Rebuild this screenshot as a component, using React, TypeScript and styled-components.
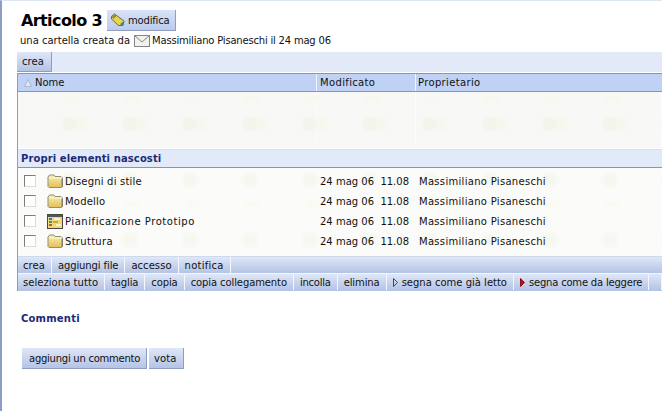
import React from "react";
import styled, { createGlobalStyle } from "styled-components";

const Global = createGlobalStyle`
  html, body { margin: 0; padding: 0; background: #fff; }
  body { width: 662px; height: 411px; overflow: hidden; font-family: "DejaVu Sans", Verdana, sans-serif; font-size: 10px; color: #111; }
`;

const Page = styled.div`
  box-sizing: border-box;
  width: 662px;
  height: 411px;
  border-left: 2px solid #8d9bc7;
  border-top: 1px solid #dfe6f5;
  padding: 8px 0 0 15px;
  overflow: hidden;
`;
const TitleRow = styled.div`
  display: flex;
  align-items: center;
  gap: 5px;
  padding-left: 4px;
  height: 23px;
`;
const Title = styled.h1`
  margin: 0;
  font: bold 16px "DejaVu Sans", sans-serif;
  letter-spacing: -0.6px;
  color: #000;
`;
const EditButton = styled.div`
  box-sizing: border-box;
  display: flex;
  align-items: center;
  gap: 2px;
  height: 21px;
  width: 69px;
  padding-left: 3px;
  background: linear-gradient(#d9e3f7, #bccbea);
  border-right: 1px solid #8f9dc4;
  border-bottom: 1px solid #8f9dc4;
  font-size: 10px;
  letter-spacing: -0.2px;
`;
const Byline = styled.div`
  display: flex;
  align-items: center;
  height: 15px;
  padding-left: 3px;
  margin-top: 1px;
  font-size: 10px;
  white-space: nowrap;
`;
const BylineLead = styled.span`
  margin-right: 4px;
`;
const BylineTail = styled.span`
  margin-left: 2px;
  letter-spacing: -0.2px;
`;
const TopBar = styled.div`
  display: flex;
  height: 20px;
  margin-top: 4px;
  background: #e2eafa;
`;
const Tab = styled.div<{ $ls?: number; $gap?: number }>`
  box-sizing: border-box;
  display: flex;
  align-items: center;
  gap: ${(p) => p.$gap ?? 3}px;
  height: 16px;
  padding: 0 6px;
  background: linear-gradient(#dfe7f8, #b4c4e5);
  border-right: 1px solid #f4f6fc;
  font-size: 10px;
  white-space: nowrap;
  letter-spacing: ${(p) => p.$ls ?? 0.05}px;
  &:first-child { padding-left: 5px; }
`;
const TopTab = styled(Tab)`
  height: 20px;
  padding: 0 7px 0 6px;
  border-right: 1px solid #8f9dc4;
  border-bottom: 1px solid #8f9dc4;
`;
const Table = styled.div`
  border-left: 1px solid #8d9bc7;
  margin-top: 1px;
`;
const Columns = "299px 99px 1fr";
const HeadRow = styled.div`
  display: grid;
  grid-template-columns: ${Columns};
  height: 19px;
  border-top: 1px solid #8a93b0;
  border-bottom: 1px solid #8a93b0;
  box-sizing: border-box;
  background: #bfd1f4;
`;
const HeadCell = styled.div`
  display: flex;
  align-items: center;
  gap: 3px;
  padding-left: 3px;
  border-right: 1px solid #f2f5fc;
  font-size: 10px;
  letter-spacing: 0.35px;
  &:first-child { padding-left: 6px; letter-spacing: 0; }
  &:last-child { border-right: none; padding-left: 2px; }
`;
const EmptyArea = styled.div`
  display: grid;
  grid-template-columns: ${Columns};
  height: 56px;
  background: #f8f8f6;
  position: relative;
`;
const EmptyCell = styled.div`
  border-right: 1px solid #fcfcfb;
  &:last-child { border-right: none; }
`;
const Patch = styled.div<{ $x: number; $y: number; $w: number; $h: number; $c: string }>`
  position: absolute;
  left: ${(p) => p.$x}px;
  top: ${(p) => p.$y}px;
  width: ${(p) => p.$w}px;
  height: ${(p) => p.$h}px;
  background: ${(p) => p.$c};
  filter: blur(1.5px);
`;
const SectionHead = styled.div`
  display: flex;
  align-items: center;
  height: 19px;
  margin-top: 1px;
  padding-left: 3px;
  background: #e2eafa;
  border-top: 1px solid #d5dff3;
  border-bottom: 1px solid #8a93b0;
  box-sizing: border-box;
  font: bold 10px "DejaVu Sans", sans-serif;
  color: #1c2a78;
  letter-spacing: 0.1px;
`;
const Rows = styled.div`
  position: relative;
  box-sizing: border-box;
  height: 89px;
  padding-top: 3px;
  background: #fbfbf9;
  border-bottom: 1px solid #cfd9ee;
`;
const Row = styled.div`
  position: relative;
  display: grid;
  grid-template-columns: ${Columns};
  height: 20px;
  align-items: center;
`;
const NameCell = styled.div`
  display: flex;
  align-items: center;
  padding-left: 6px;
  white-space: nowrap;
`;
const Check = styled.span`
  box-sizing: border-box;
  display: block;
  width: 12px;
  height: 12px;
  background: #fff;
  border: 1px solid #7d7d78;
  border-right-color: #dcdcd8;
  border-bottom-color: #dcdcd8;
  margin-right: 11px;
`;
const Name = styled.span<{ $ls: number }>`
  margin-left: 2px;
  letter-spacing: ${(p) => p.$ls}px;
`;
const DateCell = styled.div`
  padding-left: 3px;
  white-space: pre;
`;
const OwnerCell = styled.div`
  padding-left: 3px;
  white-space: nowrap;
  letter-spacing: 0.3px;
`;
const ActionBar = styled.div`
  display: flex;
  height: 16px;
  background: linear-gradient(#dfe7f8, #b4c4e5);
  overflow: hidden;
`;
const SelectBar = styled(ActionBar)`
  height: 17px;
  border-top: 1px solid #f4f6fc;
`;
const SectionTitle = styled.h2`
  margin: 22px 0 0 4px;
  height: 14px;
  font: bold 10px "DejaVu Sans", sans-serif;
  color: #1c2a78;
  letter-spacing: 0.2px;
`;
const BottomActions = styled.div`
  display: flex;
  gap: 2px;
  margin: 21px 0 0 5px;
`;
const BottomButton = styled(Tab)`
  height: 21px;
  padding: 0 6px 0 7px;
  border-right: 1px solid #8f9dc4;
  border-bottom: 1px solid #8f9dc4;
  &:first-child { padding-left: 7px; }
`;
const VoteButton = styled(BottomButton)`
  padding: 0 7px 0 5px;
`;

const Pencil = () => (
  <svg width="16" height="15" viewBox="0 0 16 15">
    <path d="M1.5 3.5 4.5 1 14 8 13 12.5 8.5 12.5 1.5 6Z" fill="#e8d54e" stroke="#6d6a35" strokeWidth="1" strokeLinejoin="round" />
    <path d="M1.5 3.5 4.5 1 6.5 3 3.5 6Z" fill="#8d8d5a" />
    <path d="M11 10 14 8.5 13 12.5 10 12.5Z" fill="#2f8f8a" />
  </svg>
);
const Mail = () => (
  <svg width="16" height="12" viewBox="0 0 16 12">
    <rect x=".5" y=".5" width="15" height="11" fill="#f2f1ec" stroke="#85858a" />
    <path d="M1 1 8 7 15 1" fill="none" stroke="#85858a" />
  </svg>
);
const Folder = () => (
  <svg width="16" height="14" viewBox="0 0 16 14">
    <defs>
      <linearGradient id="folderFill" x1="0" y1="0" x2="0" y2="1">
        <stop offset="0" stopColor="#fbf0b0" />
        <stop offset="1" stopColor="#e2bf58" />
      </linearGradient>
    </defs>
    <path d="M1 3 2.5 1H7L8 2.5H14L15.5 4V12.5L14.5 13.5H2L1 12.5Z" fill="url(#folderFill)" stroke="#8f8f80" />
    <path d="M2 4H14.5" stroke="#fff8d0" />
    <path d="M15 5V13" stroke="#77786e" />
  </svg>
);
const PlanIcon = () => (
  <svg width="16" height="15" viewBox="0 0 16 15">
    <rect x=".5" y=".5" width="15" height="14" fill="#f0d680" stroke="#4a4a3c" />
    <rect x="1" y="1" width="14" height="2" fill="#4d5560" />
    <rect x="2" y="4" width="3" height="2" fill="#3f6fb5" />
    <rect x="2" y="7" width="3" height="2" fill="#3f9a55" />
    <rect x="2" y="10" width="3" height="2" fill="#b55a3f" />
    <rect x="7" y="4" width="6" height="2" fill="#fbf3c8" />
    <rect x="6" y="7" width="5" height="2" fill="#c9a84a" />
    <rect x="9" y="10" width="5" height="2" fill="#fbf3c8" />
  </svg>
);
const SortArrow = () => (
  <svg width="8" height="8" viewBox="0 0 8 8">
    <path d="M4 .5 7.5 7.5H.5Z" fill="#dfe6f7" stroke="#a5aec9" strokeWidth=".8" />
  </svg>
);
const Triangle = ({ fill }: { fill: string }) => (
  <svg width="5" height="9" viewBox="0 0 5 9">
    <path d="M.5 .5 4.5 4.5 .5 8.5Z" fill={fill} stroke={fill === "none" ? "#39477f" : "#8a1020"} />
  </svg>
);

const rows = [
  { name: "Disegni di stile", icon: <Folder />, ls: 0.2 },
  { name: "Modello", icon: <Folder />, ls: 0.2 },
  { name: "Pianificazione Prototipo", icon: <PlanIcon />, ls: 0.55 },
  { name: "Struttura", icon: <Folder />, ls: 0.3 },
];

const patchX = [0, 60, 120, 180, 240, 300, 360, 420, 480, 540, 600];

export default function App() {
  return (
    <>
      <Global />
      <Page>
        <TitleRow>
          <Title>Articolo 3</Title>
          <EditButton>
            <Pencil />
            modifica
          </EditButton>
        </TitleRow>
        <Byline>
          <BylineLead>una cartella creata da</BylineLead>
          <Mail />
          <BylineTail>Massimiliano Pisaneschi il 24 mag 06</BylineTail>
        </Byline>
        <TopBar>
          <TopTab>crea</TopTab>
        </TopBar>
        <Table>
          <HeadRow>
            <HeadCell>
              <SortArrow />
              Nome
            </HeadCell>
            <HeadCell>Modificato</HeadCell>
            <HeadCell>Proprietario</HeadCell>
          </HeadRow>
          <EmptyArea>
            <EmptyCell />
            <EmptyCell />
            <EmptyCell />
            {patchX.map((x) => (
              <React.Fragment key={x}>
                <Patch $x={x + 45} $y={26} $w={14} $h={12} $c="#f1f5ea" />
                <Patch $x={x + 60} $y={27} $w={8} $h={10} $c="#f5f7ec" />
                <Patch $x={x + 48} $y={4} $w={12} $h={5} $c="#f7f7ec" />
              </React.Fragment>
            ))}
          </EmptyArea>
          <SectionHead>Propri elementi nascosti</SectionHead>
          <Rows>
            {patchX.map((x) => (
              <React.Fragment key={x}>
                <Patch $x={x + 45} $y={6} $w={14} $h={12} $c="#f5f8f0" />
                <Patch $x={x + 48} $y={34} $w={12} $h={5} $c="#f9f9f0" />
                <Patch $x={x + 45} $y={66} $w={14} $h={12} $c="#f5f8f0" />
              </React.Fragment>
            ))}
            {rows.map((r) => (
              <Row key={r.name}>
                <NameCell>
                  <Check />
                  {r.icon}
                  <Name $ls={r.ls}>{r.name}</Name>
                </NameCell>
                <DateCell>24 mag 06  11.08</DateCell>
                <OwnerCell>Massimiliano Pisaneschi</OwnerCell>
              </Row>
            ))}
          </Rows>
          <ActionBar>
            <Tab>crea</Tab>
            <Tab $ls={-0.1}>aggiungi file</Tab>
            <Tab>accesso</Tab>
            <Tab $ls={0.25}>notifica</Tab>
          </ActionBar>
          <SelectBar>
            <Tab>seleziona tutto</Tab>
            <Tab $ls={-0.15}>taglia</Tab>
            <Tab $ls={-0.1}>copia</Tab>
            <Tab $ls={-0.1}>copia collegamento</Tab>
            <Tab $ls={-0.25}>incolla</Tab>
            <Tab $ls={-0.1}>elimina</Tab>
            <Tab $ls={0} $gap={4}>
              <Triangle fill="none" />
              segna come già letto
            </Tab>
            <Tab $ls={-0.2} $gap={4}>
              <Triangle fill="#c01020" />
              segna come da leggere
            </Tab>
            <Tab />
          </SelectBar>
        </Table>
        <SectionTitle>Commenti</SectionTitle>
        <BottomActions>
          <BottomButton $ls={-0.25}>aggiungi un commento</BottomButton>
          <VoteButton>vota</VoteButton>
        </BottomActions>
      </Page>
    </>
  );
}
